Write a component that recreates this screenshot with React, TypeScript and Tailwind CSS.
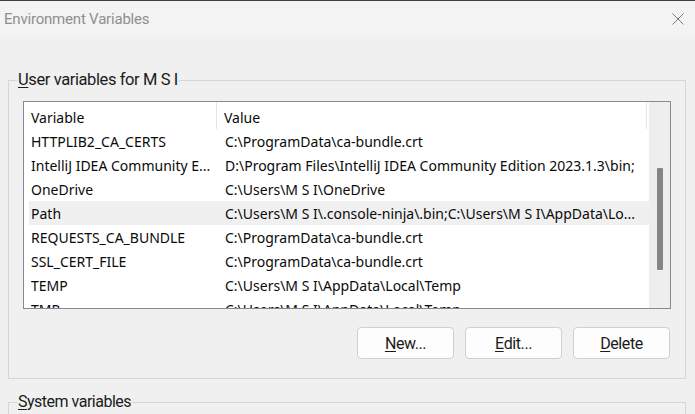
import React from "react";

const rows: [string, string][] = [
  ["HTTPLIB2_CA_CERTS", "C:\\ProgramData\\ca-bundle.crt"],
  ["IntelliJ IDEA Community E...", "D:\\Program Files\\IntelliJ IDEA Community Edition 2023.1.3\\bin;"],
  ["OneDrive", "C:\\Users\\M S I\\OneDrive"],
  ["Path", "C:\\Users\\M S I\\.console-ninja\\.bin;C:\\Users\\M S I\\AppData\\Lo..."],
  ["REQUESTS_CA_BUNDLE", "C:\\ProgramData\\ca-bundle.crt"],
  ["SSL_CERT_FILE", "C:\\ProgramData\\ca-bundle.crt"],
  ["TEMP", "C:\\Users\\M S I\\AppData\\Local\\Temp"],
  ["TMP", "C:\\Users\\M S I\\AppData\\Local\\Temp"],
];

function Btn({ first, rest }: { first: string; rest: string }) {
  return (
    <button className="w-[97px] h-[32px] rounded-[4px] border border-[#d0d0d0] bg-[#fdfdfd] text-[16px] text-[#1b1b1b] font-['Roboto',sans-serif] tracking-[-0.4px] flex items-center justify-center pt-[1px]">
      <span className="underline underline-offset-[2px] decoration-1">{first}</span>
      <span>{rest}</span>
    </button>
  );
}

export default function App() {
  return (
    <div className="w-[695px] h-[414px] overflow-hidden bg-[#f0f0f0] flex flex-col">
      <div className="h-px bg-[#3b3f48] shrink-0" />
      <div className="h-[36px] shrink-0 bg-[#f3f3f3] flex items-center justify-between pl-[4px] pr-[11px]">
        <span className="text-[15px] text-[#8f8f8f] font-['Roboto',sans-serif] tracking-[-0.2px]">
          Environment Variables
        </span>
        <svg width="12" height="12" viewBox="0 0 12 12" className="mb-[1px]">
          <path d="M0.5 0.5 L11.5 11.5 M11.5 0.5 L0.5 11.5" stroke="#7a7a7a" strokeWidth="1" fill="none" />
        </svg>
      </div>
      <div className="flex-1 flex flex-col px-[8px] pr-[9px]">
        <fieldset className="mt-[34px] border border-[#d6d6d6] px-[14px] pt-[12px] pb-[19px] flex flex-col">
          <legend className="-ml-[6px] px-[1px] text-[16.5px] leading-[18px] text-[#1b1b1b] font-['Roboto',sans-serif] tracking-[-0.4px]">
            <span className="underline underline-offset-[2px] decoration-1">U</span>ser variables for M S I
          </legend>
          <div className="h-[208px] border border-[#868a8e] bg-white flex overflow-hidden">
            <div className="flex-1 flex flex-col overflow-hidden font-['Noto_Sans',sans-serif] text-[14px] text-[#0a0a0a]">
              <div className="h-[27px] shrink-0 flex items-center">
                <div className="w-[193px] h-full pl-[7px] pt-[3px] flex items-center border-r border-[#e5e5e5]">Variable</div>
                <div className="w-[430px] h-full pl-[7px] pt-[3px] flex items-center border-r border-[#e5e5e5]">Value</div>
              </div>
              {rows.map(([k, v], i) => (
                <div
                  key={k}
                  className={
                    "h-[24px] shrink-0 ml-[5px] flex items-center whitespace-nowrap " +
                    (i === 3 ? "bg-[#f0f0f0]" : "")
                  }
                >
                  <div className="w-[188px] pl-[2px] overflow-hidden">{k}</div>
                  <div className="pl-[8px] overflow-hidden">{v}</div>
                </div>
              ))}
            </div>
            <div className="w-[21px] shrink-0 bg-[#eeeeee] flex justify-center pt-[66px]">
              <div className="w-[6px] h-[102px] bg-[#858585] rounded-[1px]" />
            </div>
          </div>
          <div className="mt-[18px] flex justify-end gap-[11px] pr-[1px]">
            <Btn first="N" rest="ew..." />
            <Btn first="E" rest="dit..." />
            <Btn first="D" rest="elete" />
          </div>
        </fieldset>
        <fieldset className="mt-[14px] border border-[#d6d6d6] px-[14px] h-[60px]">
          <legend className="-ml-[6px] px-[1px] text-[16px] leading-[18px] text-[#1b1b1b] font-['Roboto',sans-serif] tracking-[-0.5px]">
            <span className="underline underline-offset-[2px] decoration-1">S</span>ystem variables
          </legend>
        </fieldset>
      </div>
    </div>
  );
}
